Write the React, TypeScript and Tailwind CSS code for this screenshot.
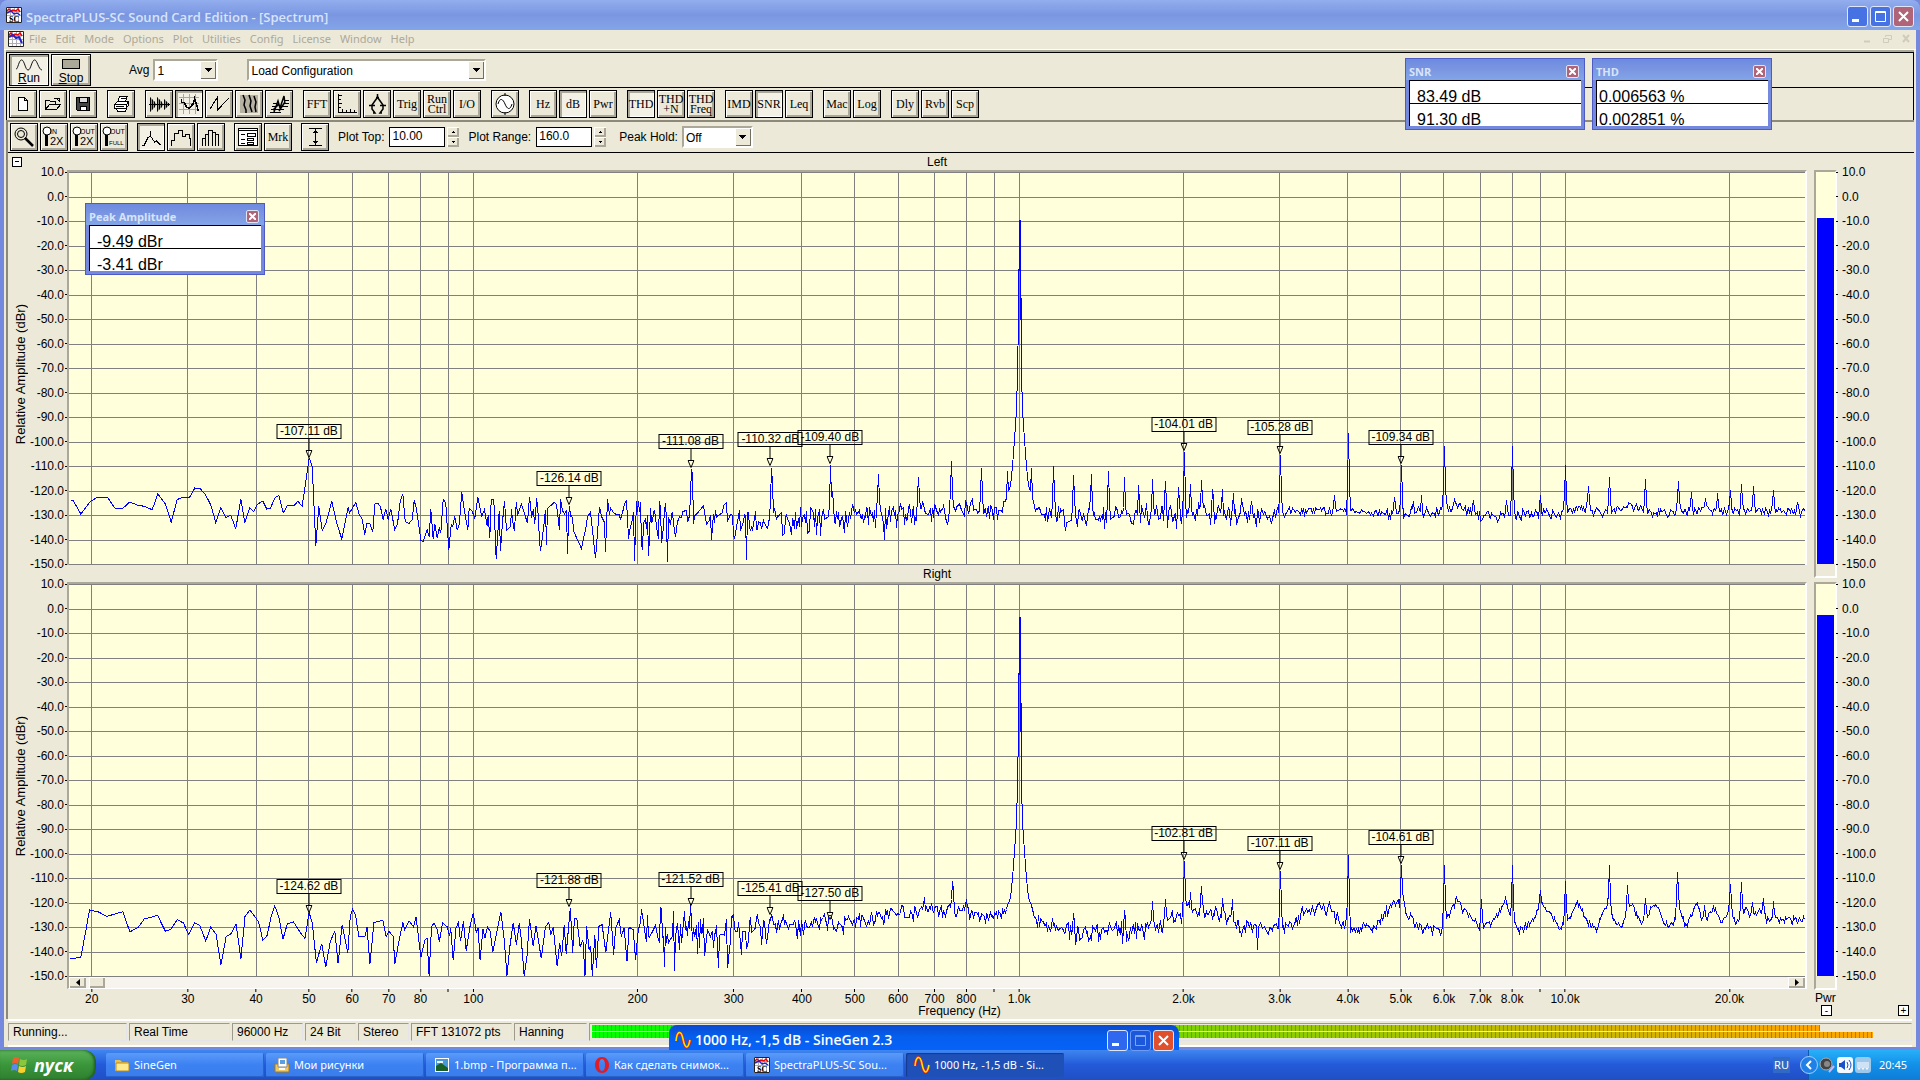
import React from "react";

type Point = [number, number];

// window x of the plot's left edge, all trace tables below use window pixels
const PLOT_X = 69;
const PLOT_W = 1736;
const PLOT_H = 393;

const DB_TICKS = [10, 0, -10, -20, -30, -40, -50, -60, -70, -80, -90, -100, -110, -120, -130, -140, -150];

const FREQS = [
  20, 30, 40, 50, 60, 70, 80, 90, 100, 200, 300, 400, 500, 600, 700, 800, 900, 1000, 2000, 3000, 4000, 5000, 6000,
  7000, 8000, 9000, 10000, 20000,
];

const freqX = (f: number) => 473.3 + 545.9 * Math.log10(f / 100) - PLOT_X;
const dbY = (db: number) => 0.5 + (10 - db) * 2.45;

// low band of both channels
const leftLow = scale(
  [
    [210, 1052], [218, 1052], [241, 1093], [270, 1055], [292, 1042], [320, 1042], [343, 1075], [368, 1075],
    [388, 1057], [410, 1066], [432, 1070], [455, 1080], [472, 1033], [494, 1062], [512, 1117], [530, 1050],
    [547, 1042], [566, 1045], [583, 1015], [600, 1018], [615, 1035], [631, 1066], [646, 1119], [661, 1074],
    [676, 1103], [691, 1097], [706, 1137], [721, 1048], [733, 1119], [748, 1075], [760, 1086], [770, 1064],
    [787, 1054], [799, 1078], [810, 1075], [823, 1045], [835, 1037], [848, 1090], [860, 1068], [880, 1068],
    [892, 1055], [905, 1069], [926, 925], [935, 950], [946, 1188], [955, 1070], [965, 1142], [977, 1118],
    [994, 1055], [1010, 1125], [1024, 1168], [1043, 1073], [1047, 1090], [1066, 1058], [1076, 1095], [1085, 1108],
    [1093, 1155], [1099, 1120], [1108, 1120], [1117, 1147], [1123, 1063], [1132, 1060], [1140, 1072], [1148, 1110],
    [1156, 1078], [1163, 1110], [1171, 1078], [1183, 1140], [1191, 1122], [1199, 1055], [1207, 1033], [1214, 1115],
    [1225, 1122], [1235, 1110], [1241, 1052], [1248, 1078], [1256, 1135], [1261, 1172], [1268, 1176], [1280, 1140],
    [1286, 1162], [1291, 1078], [1298, 1168], [1303, 1122], [1310, 1165], [1316, 1135], [1321, 1150], [1328, 1048],
    [1336, 1062], [1345, 1202], [1352, 1125], [1357, 1130], [1363, 1100], [1370, 1140], [1376, 1125], [1384, 1028],
    [1392, 1085], [1402, 1140], [1406, 1075], [1415, 1085], [1423, 1105], [1432, 1043], [1444, 1100], [1452, 1080],
    [1460, 1130], [1463, 1095], [1468, 1165], [1472, 1050], [1480, 1050], [1487, 1228], [1496, 1085],
  ],
  3,
  -22.3,
);

const rightLow = scale(
  [
    [170, 355], [185, 355], [197, 352], [208, 280], [218, 211], [240, 217], [261, 230], [280, 223], [300, 216],
    [317, 277], [338, 262], [352, 238], [385, 227], [404, 275], [418, 268], [433, 240], [448, 250], [461, 284],
    [476, 249], [488, 257], [503, 304], [515, 262], [528, 283], [540, 376], [553, 290], [565, 282], [577, 252],
    [589, 358], [599, 230], [611, 211], [632, 246], [643, 302], [653, 288], [663, 232], [672, 199], [682, 232],
    [692, 299], [703, 252], [718, 247], [735, 280], [746, 296], [756, 218], [764, 250], [774, 370], [787, 312],
    [797, 382], [808, 305], [819, 275], [827, 371], [837, 255], [851, 340], [857, 228], [863, 208], [870, 228],
    [878, 290], [893, 290], [898, 262], [905, 374], [915, 248], [937, 242], [945, 290], [952, 275], [962, 290],
    [966, 374], [975, 310], [986, 248], [990, 270], [1001, 244], [1012, 262], [1018, 232], [1030, 352], [1040, 300],
    [1045, 295], [1050, 408], [1056, 262], [1062, 250], [1070, 268], [1075, 306], [1083, 250], [1095, 262],
    [1100, 290], [1103, 265], [1109, 362], [1116, 265], [1122, 248], [1127, 305], [1134, 245], [1141, 333],
    [1150, 262], [1158, 220], [1166, 280], [1170, 265], [1175, 362], [1182, 268], [1187, 295], [1193, 262],
    [1200, 275], [1206, 338], [1212, 300], [1226, 217], [1234, 300], [1241, 408], [1248, 320], [1256, 250],
    [1264, 315], [1271, 250], [1276, 300], [1283, 408], [1290, 350], [1296, 238], [1305, 320], [1312, 258],
    [1325, 356], [1335, 262], [1343, 248], [1348, 285], [1354, 262], [1364, 380], [1370, 310], [1375, 350],
    [1381, 255], [1386, 342], [1396, 205], [1402, 340], [1406, 235], [1412, 235], [1420, 322], [1427, 300],
    [1432, 408], [1436, 258], [1442, 330], [1446, 318], [1450, 408], [1456, 285], [1460, 385], [1466, 260],
    [1474, 255], [1483, 338], [1495, 217], [1502, 345], [1507, 265], [1516, 240], [1521, 290], [1528, 265],
    [1535, 365], [1540, 262], [1550, 270], [1556, 360], [1561, 290],
  ],
  2.45,
  255.7,
);

// noise floor: x, mean dB, spread
const leftFloor = [
  [500, -131, 12], [650, -132, 12], [670, -131, 8], [800, -131, 7], [900, -129, 6], [960, -127, 5], [1000, -127, 4],
  [1040, -127, 4], [1060, -130, 5], [1200, -129, 6], [1260, -130, 5], [1310, -127.5, 2], [1380, -129, 2.5],
  [1430, -129, 3], [1460, -125, 2.5], [1475, -130, 3], [1540, -129, 3], [1560, -129, 2.5], [1580, -126, 2],
  [1600, -129, 2.5], [1630, -126, 2], [1650, -129, 2.5], [1680, -128, 2.5], [1740, -128, 2], [1806, -128, 2],
];

const leftPeaks: Point[] = [
  [536, -123], [569, -126], [595, -147.5], [634, -148.5], [638, -124], [648, -146.5], [665, -125], [667, -149],
  [691, -111], [692, -113], [746, -148], [771, -110.5], [772, -117], [816, -138], [830, -109.5], [832, -120],
  [878, -113], [884, -140], [918, -114.5], [951, -107.7], [981, -110.5], [1007, -112], [1031, -110.5],
  [1053, -109.8], [1073, -113.5], [1091, -113], [1108, -112], [1124, -114.5], [1138, -117.6], [1152, -115],
  [1165, -116], [1178, -118.5], [1184, -104], [1190, -117], [1201, -115.5], [1212, -119], [1222, -119],
  [1233, -121], [1241, -123], [1251, -124], [1280, -105.3], [1334, -121.7], [1348, -96.2], [1394, -122.4],
  [1401, -109.4], [1413, -124], [1421, -121.7], [1444, -101.7], [1473, -123.7], [1506, -123.7], [1512, -101.7],
  [1540, -121.7], [1565, -109.4], [1588, -118], [1609, -114.5], [1645, -115], [1678, -116], [1691, -120.5],
  [1705, -123], [1717, -121], [1730, -119.6], [1741, -117], [1753, -118], [1773, -119.6], [1797, -124.4],
];

const rightFloor = [
  [637, -131, 12], [680, -131, 11], [740, -131, 8], [790, -129, 5], [840, -128, 5], [870, -126, 5], [900, -123.5, 4],
  [930, -122.5, 4], [960, -123, 4], [980, -125, 3], [1000, -125, 4], [1038, -127, 4], [1060, -131, 4],
  [1130, -131, 5], [1155, -130, 4], [1175, -125, 4], [1190, -122.5, 4], [1215, -124, 4], [1241, -129.5, 4],
  [1270, -130.5, 3], [1290, -129, 4], [1302, -123.6, 4], [1317, -121, 3], [1329, -122.5, 4], [1341, -127, 4],
  [1353, -130.4, 3], [1374, -130, 3], [1384, -124, 4], [1394, -119.5, 3], [1404, -121, 3], [1413, -127, 3],
  [1421, -130.4, 3], [1441, -130, 3], [1447, -125.7, 2], [1456, -119, 2], [1466, -124, 2], [1482, -130.5, 2],
  [1494, -126, 2], [1505, -119.5, 2], [1511, -127, 2], [1519, -130, 3], [1531, -128, 2], [1539, -121, 2],
  [1547, -122, 2], [1560, -130, 2], [1568, -127, 2], [1577, -119.5, 2], [1588, -128, 2], [1596, -130.4, 2],
  [1606, -121, 2], [1613, -127, 2], [1621, -130, 2], [1631, -119.5, 2], [1641, -128.4, 2],
  [1655, -120, 2], [1664, -128.4, 2], [1672, -129, 2], [1678, -121, 2], [1686, -130, 2],
  [1696, -120, 2], [1704, -128, 2], [1713, -121, 2], [1721, -128, 2], [1730, -122, 2], [1735, -128, 2],
  [1746, -122, 2], [1752, -127, 2], [1757, -123, 2], [1766, -126, 3], [1775, -127, 2], [1806, -126.5, 2],
];

const rightPeaks: Point[] = [
  [664, -146], [674, -147.7], [690, -120.6], [704, -141.7], [718, -146.5], [727, -146.7], [733, -124.5],
  [741, -141], [757, -125], [771, -125], [783, -124.7], [829, -125], [924, -117.5], [952, -111], [953, -115],
  [966, -118.5], [1073, -124], [1075, -137], [1124, -123], [1152, -119], [1165, -118.4], [1184, -102.8],
  [1190, -115.7], [1201, -113], [1222, -118], [1232, -118.4], [1257, -139], [1280, -107], [1348, -100.5],
  [1401, -104.6], [1444, -104.6], [1456, -117], [1481, -118.4], [1505, -118], [1512, -104.6], [1540, -114.8],
  [1565, -111], [1609, -104.6], [1627, -112.7], [1645, -117.8], [1677, -107.3], [1704, -121], [1730, -112.3],
  [1741, -111.4], [1752, -119.5], [1763, -118], [1773, -119.3],
];

// skirt of the 1 kHz carrier: distance, dB
const skirt: Point[] = [
  [0, 0], [1, -50], [2, -72], [3, -87], [5, -99], [7, -110], [9, -118], [12, -121], [15, -126], [18, -140],
];

function scale(pts: Point[], sx: number, oy: number): Point[] {
  return pts.map(([x, y]) => [x / sx - PLOT_X, y / 3 + oy]);
}

function lerp(table: number[][], x: number, col: number) {
  let i = 1;
  while (i < table.length - 1 && table[i][0] < x) i++;
  const a = table[i - 1];
  const b = table[i];
  const t = Math.min(1, Math.max(0, (x - a[0]) / (b[0] - a[0])));
  return a[col] + (b[col] - a[col]) * t;
}

function buildTrace(low: Point[], start: number, floor: number[][], peaks: Point[], carrier: number, seed: number) {
  const pts = [...low];
  let s = seed;
  const rnd = () => {
    s = (s * 16807) % 2147483647;
    return s / 2147483647;
  };
  for (let x = start; x <= 1805; x++) {
    const peak = peaks.find((p) => p[0] === x);
    const r = rnd() + rnd() - 1;
    const mean = lerp(floor, x, 1);
    const amp = lerp(floor, x, 2);
    const draw = rnd();
    const d = Math.abs(x - 1019);
    if (peak) {
      pts.push([x - PLOT_X, dbY(peak[1])]);
      continue;
    }
    const near = peaks.find((p) => Math.abs(p[0] - x) < 3 && p[1] > mean);
    // bins are further apart at the low end of the log axis
    const keep = x < 620 ? 0.45 : x < 760 ? 0.6 : 0.8;
    if (draw > keep && d > 18 && !near) continue;
    let db = mean + r * amp * (r < 0 ? 1.3 : 0.9);
    if (near && Math.abs(near[0] - x) === 1) db = db * 0.65 + near[1] * 0.35;
    if (d < 18) db = Math.max(db, d === 0 ? carrier : lerp(skirt, d, 1));
    pts.push([x - PLOT_X, dbY(Math.max(-150, db))]);
  }
  pts.push([1020 - PLOT_X, dbY(carrier)]);
  pts.sort((a, b) => a[0] - b[0]);
  return pts.map(([x, y]) => (x + 0.5).toFixed(1) + "," + y.toFixed(1)).join(" ");
}

const leftTrace = buildTrace(leftLow, 500, leftFloor, leftPeaks, -9.49, 77);
const rightTrace = buildTrace(rightLow, 638, rightFloor, rightPeaks, -3.41, 4242);

const leftMarkers: Point[] = [
  [50, -107.11], [150, -126.14], [250, -111.08], [350, -110.32], [450, -109.4], [2000, -104.01], [3000, -105.28],
  [5000, -109.34],
];
const rightMarkers: Point[] = [
  [50, -124.62], [150, -121.88], [250, -121.52], [350, -125.41], [450, -127.5], [2000, -102.81], [3000, -107.11],
  [5000, -104.61],
];

const UP = "shadow-[inset_1px_1px_0_#fff,inset_-2px_-2px_0_#aca899]";
const DOWN = "shadow-[inset_2px_2px_0_#aca899,inset_-1px_-1px_0_#fff]";

function ToolButton({ label, active, children }: { label: string; active?: boolean; children: React.ReactNode }) {
  return (
    <button
      aria-label={label}
      className={
        "flex h-7 w-7 items-center justify-center border border-black font-['Liberation_Serif',serif] leading-[11px] " +
        (active ? "bg-[#f3f1e6] " + DOWN : "bg-[#ece9d8] " + UP)
      }
    >
      {children}
    </button>
  );
}

function TextTool({ text, active, small }: { text: string; active?: boolean; small?: boolean }) {
  return (
    <ToolButton label={text} active={active}>
      <span className={"whitespace-pre text-center text-[12px] " + (small ? "leading-[10px]" : "leading-3")}>
        {text}
      </span>
    </ToolButton>
  );
}

function Icon({ children }: { children: React.ReactNode }) {
  return (
    <svg width="24" height="24" viewBox="0 0 24 24" fill="none" stroke="#000" shapeRendering="crispEdges">
      {children}
    </svg>
  );
}

function Lens({ top, bottom }: { top: string; bottom: string }) {
  return (
    <svg width="24" height="24" viewBox="0 0 24 24" fill="none" stroke="#000">
      <circle cx="5" cy="6" r="4" fill="#fff" />
      <path d="M4.500 10v11" strokeWidth="3" />
      <text x="8" y="9" fontSize="7" stroke="none" fill="#000" fontFamily="Liberation Sans">
        {top}
      </text>
      <text x={bottom === "2X" ? 8 : 7} y="20" fontSize={bottom === "2X" ? 11 : 6} stroke="none" fill="#000" fontFamily="Liberation Sans">
        {bottom}
      </text>
    </svg>
  );
}

function Combo({ label, options, className }: { label: string; options: string[]; className: string }) {
  return (
    <div className={"flex h-[22px] border-2 border-[#aca899] border-b-white border-r-white bg-white " + className}>
      <select aria-label={label} className="min-w-0 flex-1 appearance-none bg-white pl-[2px] pt-px text-[12px] leading-4 outline-none">
        {options.map((o) => (
          <option key={o}>{o}</option>
        ))}
      </select>
      <span className="pointer-events-none flex w-4 items-center justify-center bg-[#ece9d8] shadow-[inset_1px_1px_0_#fff,inset_-1px_-1px_0_#716f64]">
        <svg width="7" height="4" viewBox="0 0 7 4" shapeRendering="crispEdges">
          <path d="M0 0h7L3.500 4z" />
        </svg>
      </span>
    </div>
  );
}

function Spin({ id, label, value }: { id: string; label: string; value: string }) {
  return (
    <div className="flex items-center">
      <label htmlFor={id} className="pr-[5px]">
        {label}
      </label>
      <input id={id} defaultValue={value} className="h-5 w-14 border border-black bg-white pb-[2px] pl-[2px] outline-none" />
      <div className="ml-[2px] flex w-3 flex-col">
        <button aria-label={label + " up"} className={"flex h-[10px] items-center justify-center " + UP}>
          <svg width="3" height="2" viewBox="0 0 3 2" shapeRendering="crispEdges">
            <path d="M0 2h3L1.500 0z" />
          </svg>
        </button>
        <button aria-label={label + " down"} className={"flex h-[10px] items-center justify-center " + UP}>
          <svg width="3" height="2" viewBox="0 0 3 2" shapeRendering="crispEdges">
            <path d="M0 0h3L1.500 2z" />
          </svg>
        </button>
      </div>
    </div>
  );
}

function AppIcon() {
  return (
    <svg width="16" height="16" viewBox="0 0 16 16">
      <path d="M0 0h16v16H0z" fill="#fff" />
      <path d="M0 4.500h16M0 8.500h16M0 12.500h16M4.500 0v16M8.500 0v16M12.500 0v16" stroke="#b0b0b0" fill="none" />
      <path d="M1 4l2-2 2 3 2-2 3 1 2-2 2 3" stroke="#e00" strokeWidth="1.500" fill="none" />
      <path d="M1 6l4-2 3 3 3-1 3 6" stroke="#22c" strokeWidth="2" fill="none" />
      <path d="M.5.5h15v15H.5z" fill="none" stroke="#222" />
    </svg>
  );
}

// same sheet icon with the SC badge
function AppIconSC() {
  return (
    <svg width="16" height="16" viewBox="0 0 16 16">
      <path d="M0 0h16v16H0z" fill="#fff" />
      <path d="M0 4.500h16M0 8.500h16M4.500 0v16M8.500 0v16M12.500 0v16" stroke="#b0b0b0" fill="none" />
      <path d="M1 4l2-2 2 2 2-1 3 1 2-2 2 3" stroke="#e00" strokeWidth="1.500" fill="none" />
      <path d="M1 6l4-2 3 3 3-1 3 2" stroke="#22c" strokeWidth="1.500" fill="none" />
      <path d="M.5.5h15v15H.5z" fill="none" stroke="#222" />
      <text x="3" y="15" fontSize="8" fontWeight="bold" fontFamily="Liberation Serif">
        SC
      </text>
    </svg>
  );
}

function SineIcon() {
  return (
    <svg width="16" height="20" viewBox="0 0 16 20" fill="none">
      <path d="M1 11C2 1 6-1 8 9s5 11 7 1" stroke="#e02020" strokeWidth="3" />
      <path d="M1 11C2 1 6-1 8 9s5 11 7 1" stroke="#ffe600" strokeWidth="1.500" />
    </svg>
  );
}

function Readout({ title, rows, pad }: { title: string; rows: string[]; pad: string }) {
  return (
    <section className="flex h-[72px] w-[180px] flex-col border border-[#4f5bc4] bg-[#7488dd] px-[3px] pb-[3px] font-['Liberation_Sans',sans-serif]">
      <div className="-mx-[3px] flex h-[21px] items-center justify-between bg-linear-to-b from-[#6d8ae0] via-[#7b96e1] to-[#82a5e8] pl-[3px] pr-[5px] pt-1">
        <h2 className="font-['Open_Sans',sans-serif] text-[11px] font-bold leading-4 text-[#d8e4f8]">{title}</h2>
        <button aria-label={"Close " + title} className="flex h-[13px] w-[13px] items-center justify-center rounded-xs border border-[#dfe3f5] bg-[#b06478]">
          <svg width="7" height="7" viewBox="0 0 7 7" stroke="#fff" strokeWidth="2">
            <path d="M0 0l7 7M7 0L0 7" />
          </svg>
        </button>
      </div>
      <div className="flex flex-1 flex-col border-l border-t border-black bg-white">
        <p className={"border-b border-black pt-[10px] text-[16px] leading-3 " + pad}>{rows[0]}</p>
        <p className={"pt-[10px] text-[16px] leading-3 " + pad}>{rows[1]}</p>
      </div>
    </section>
  );
}

function DbScale({ side }: { side: "left" | "right" }) {
  return (
    <ol
      className={
        "-my-[6px] flex h-[404px] flex-col justify-between text-[12px] leading-3 " +
        (side === "left" ? "items-end" : "items-start")
      }
    >
      {DB_TICKS.map((db) => (
        <li key={db} className={"flex items-center " + (side === "left" ? "gap-px" : "flex-row-reverse gap-1")}>
          <span>{db.toFixed(1)}</span>
          <i className="h-px w-[2px] bg-black" />
        </li>
      ))}
    </ol>
  );
}

function Channel({ name, trace, markers }: { name: string; trace: string; markers: Point[] }) {
  return (
    <section>
      <div className="flex h-[17px] items-center">
        <div className="flex w-[59px] pl-1">
          {name === "Left" && (
            <button aria-label="Collapse" className="flex h-[10px] w-[10px] items-center justify-center border border-black bg-white">
              <i className="h-px w-1 bg-black" />
            </button>
          )}
        </div>
        <h3 className="flex-1 text-center text-[12px] leading-4">{name}</h3>
      </div>
      <div className="flex">
        <div className="flex w-[59px] justify-between pt-[2px]">
          <div className="flex w-6 items-center justify-center pl-1 pt-3">
            <span className="rotate-180 whitespace-nowrap text-[13px] leading-4 [writing-mode:vertical-rl]">
              Relative Amplitude (dBr)
            </span>
          </div>
          <DbScale side="left" />
        </div>
        <div className="relative min-w-0 flex-1 border-2 border-b-0 border-[#aca899] border-r-white bg-[#ffffdc]">
          <svg
            className="block h-[393px] w-full"
            viewBox={"0 0 " + PLOT_W + " " + PLOT_H}
            preserveAspectRatio="none"
            fill="none"
            shapeRendering="crispEdges"
          >
            {DB_TICKS.map((db) => (
              <line key={db} x1="0" x2={PLOT_W} y1={dbY(db)} y2={dbY(db)} stroke="#808080" />
            ))}
            {FREQS.map((f) => (
              <line key={f} x1={freqX(f)} x2={freqX(f)} y1="0" y2={PLOT_H} stroke="#808080" />
            ))}
            <polyline points={trace} stroke="#0000ff" vectorEffect="non-scaling-stroke" />
          </svg>
          {markers.map(([f, db]) => (
            <div
              key={f}
              className="absolute flex -translate-x-1/2 flex-col items-center"
              style={{ left: (freqX(f) / PLOT_W) * 100 + "%", top: Math.round(dbY(db) - 35) }}
            >
              <span className="w-[65px] whitespace-nowrap border border-black text-center text-[12px] leading-[13px]">
                {db.toFixed(2)} dB
              </span>
              <svg width="7" height="19" viewBox="0 0 7 19" fill="none" stroke="#000">
                <path d="M3.500 0v11M.5 11.500h6L3.500 18.500z" />
              </svg>
            </div>
          ))}
        </div>
      </div>
    </section>
  );
}

function PowerMeter({ level, last }: { level: string; last?: boolean }) {
  return (
    <div className={"flex " + (last ? "" : "mb-1")}>
      <div className="h-[408px] w-[23px] border-2 border-[#aca899] border-b-white border-r-white">
        <div className="flex h-[392px] flex-col justify-end bg-[#ffffdc] px-px">
          <div className={"w-full bg-[#0000ff] " + level} />
        </div>
      </div>
      <div className="-ml-px pt-[2px]">
        <DbScale side="right" />
      </div>
    </div>
  );
}

function freqLabel(f: number) {
  if (f === 90 || f === 900 || f === 9000) return "";
  return f >= 1000 ? (f / 1000).toFixed(1) + "k" : String(f);
}

function StatusCell({ text, className }: { text: string; className: string }) {
  return (
    <span className={"h-[18px] border border-[#9d9a8c] border-b-[#e4e4ea] border-r-[#e4e4ea] pl-1 leading-4 " + className}>
      {text}
    </span>
  );
}

function Task({ text, active, icon }: { text: string; active?: boolean; icon: React.ReactNode }) {
  return (
    <button
      className={
        "flex h-6 w-[158px] items-center gap-1 rounded-xs pl-2 text-[11px] leading-4 text-white " +
        (active
          ? "bg-[#1e50b8] shadow-[inset_1px_1px_1px_#153a8c]"
          : "bg-linear-to-b from-[#5a9af8] via-[#3c81f3] to-[#3a7cea] shadow-[inset_-1px_-1px_0_#2a62cc]")
      }
    >
      {icon}
      <span className="truncate">{text}</span>
    </button>
  );
}

function TitleButton({ kind, tone }: { kind: "min" | "max" | "close"; tone: string }) {
  return (
    <button aria-label={kind} className={"flex h-[21px] w-[21px] items-center justify-center rounded-[3px] border " + tone}>
      <svg width="13" height="13" viewBox="0 0 13 13" fill="none" stroke="currentColor">
        {kind === "min" && <path d="M1 10.500h7" strokeWidth="3" />}
        {kind === "max" && <path d="M1.500 1.500h10v10h-10zM1 2.500h11" />}
        {kind === "close" && <path d="M2 2l9 9M11 2l-9 9" strokeWidth="2" />}
      </svg>
    </button>
  );
}

function App() {
  return (
    <div className="relative flex min-h-screen flex-col bg-[#7488dd] font-['Liberation_Sans',sans-serif] text-[12px] text-black">
      <header className="flex h-[30px] items-center rounded-t-lg bg-linear-to-b from-[#92aeee] via-[#7b96e1] to-[#82a5e8] pl-[6px] pr-[6px]">
        <AppIconSC />
        <h1 className="flex-1 pl-1 pt-1 font-['Open_Sans',sans-serif] text-[13px] font-semibold leading-5 text-[#d8e4f8]">
          SpectraPLUS-SC Sound Card Edition - [Spectrum]
        </h1>
        <div className="flex gap-[2px] pt-[3px] text-white">
          <TitleButton kind="min" tone="border-[#dfe6fa] bg-[#4672e4]" />
          <TitleButton kind="max" tone="border-[#dfe6fa] bg-[#4672e4]" />
          <TitleButton kind="close" tone="border-[#dfe6fa] bg-[#b06478]" />
        </div>
      </header>

      <main className="mx-1 flex flex-1 flex-col bg-[#ece9d8]">
        <nav className="flex h-5 items-center border-b border-white pb-[2px] pl-1 font-['Noto_Sans',sans-serif] text-[11px] leading-4 text-[#aca899]">
          <AppIcon />
          {["File", "Edit", "Mode", "Options", "Plot", "Utilities", "Config", "License", "Window", "Help"].map((m) => (
            <button key={m} className="pl-[5px] pr-1">
              {m}
            </button>
          ))}
          <div className="ml-auto pr-[5px]">
            <svg width="48" height="9" viewBox="0 0 48 9" fill="none" stroke="#cfccbc">
              <path d="M1 7.500h6" strokeWidth="2" />
              <path d="M20.500 4.500h5v4h-5zM22.500 3V1.500h6v4H26" />
              <path d="M40 1l6 7M46 1l-6 7" strokeWidth="2" />
            </svg>
          </div>
        </nav>

        <div className="ml-[2px] mr-[2px] border-t-2 border-[#aca899]">
          <div className="border-x border-t border-black">
            <div className="flex h-[35px] items-center border-b border-black pl-[2px]">
              <button className={"flex h-8 w-10 flex-col items-center border border-black bg-[#f3f1e6] pt-1 text-[12px] leading-[14px] " + DOWN}>
                <svg width="30" height="13" viewBox="0 0 30 13" fill="none" stroke="#000">
                  <path d="M1 11C3 11 4 1 7 1s4 11 7 11 4-11 7-11 4 10 8 11" />
                </svg>
                <span>
                  <u>R</u>un
                </span>
              </button>
              <button className={"ml-[2px] flex h-8 w-10 flex-col items-center border border-black pt-1 text-[12px] leading-[14px] " + UP}>
                <span className="mb-[2px] h-[11px] w-[18px] border border-black bg-[#aca899]" />
                <span>
                  <u>S</u>top
                </span>
              </button>
              <span className="ml-[38px] mr-1">Avg</span>
              <Combo label="Avg" options={["1"]} className="w-[65px]" />
              <Combo label="Configuration" options={["Load Configuration"]} className="ml-[29px] w-[239px]" />
            </div>

            <div className="flex h-8 items-center gap-[10px] pl-[2px]">
              <div className="flex gap-[2px]">
                <ToolButton label="New">
                  <Icon><path d="M7.500 5.500h6l3 3v10h-9zM13.500 5.500v3h3" fill="#fff" /></Icon>
                </ToolButton>
                <ToolButton label="Open">
                  <Icon><path d="M4.500 17.500v-9h4l1 1h5v3M4.500 17.500l4-5h11l-4 5zM13 6.500h5v3M16 7l3 3" /></Icon>
                </ToolButton>
                <ToolButton label="Save">
                  <Icon>
                    <path d="M5.500 5.500h13v13h-12l-1-1z" fill="#444" />
                    <path d="M8 5.500h8v5H8z" fill="#ddd" />
                    <path d="M9 18v-4h6v4" fill="#fff" />
                  </Icon>
                </ToolButton>
              </div>
              <ToolButton label="Print">
                <Icon>
                  <path d="M5.500 12.500l3-3h11l-2 3zM9.500 9l1-5h8l-2 5M5.500 12.500v4h12v-4M17.500 16l2-3V9.500M7.500 16.500l1 3h8l1-3" fill="#fff" />
                  <path d="M11.500 6.500h5M7 14.500h8" />
                </Icon>
              </ToolButton>
              <div className="flex gap-[2px]">
                <ToolButton label="Time series">
                  <svg width="24" height="24" viewBox="0 0 24 24" fill="none" stroke="#000">
                    <path d="M2 12.500h21" />
                    <path d="M3.500 5.500v14M5.500 7.500v10M7.500 9.500v6M10.500 5.500v14M12.500 7.500v10M14.500 9.500v6M17.500 7.500v10M19.500 9.500v6M21.500 11v3" />
                    <path d="M3 5l7 7.500L3 20zM10 5l7 7.500-7 7.500zM17 7l6 5.500-6 5.500z" fill="#00000066" stroke="none" />
                  </svg>
                </ToolButton>
                <ToolButton label="Spectrum" active>
                  <Icon>
                    <path d="M2 5.500h20M2 11.500h20M2 17.500h20M6.500 2v20M12.500 2v20M18.500 2v20" stroke="#aca899" />
                    <path d="M4.500 7v3l3 1 2 4 3 1.500 2-3 2-2 1-5 2 6 2 7" strokeWidth="1.500" />
                  </Icon>
                </ToolButton>
                <ToolButton label="Phase">
                  <Icon><path d="M3 17L10.500 5v13L22 6" /></Icon>
                </ToolButton>
                <ToolButton label="Spectrogram">
                  <svg width="24" height="24" viewBox="0 0 24 24" fill="none" stroke="#000">
                    <path d="M3 3h18v18H3z" fill="#b5b2a4" stroke="none" />
                    <path d="M6 3l2 5-1 5 2 5v3M12 3l2 6-1 5 2 6M17 4l2 6-1 5 1 5" strokeWidth="1.500" />
                  </svg>
                </ToolButton>
                <ToolButton label="Surface">
                  <svg width="24" height="24" viewBox="0 0 24 24" fill="none" stroke="#000">
                    <path d="M3 20.500h11M4 17.500h13M5 14.500h4M15 14.500h6M6 11.500h4M17 11.500h5M17 8.500h5" />
                    <path d="M7 20l4-11 2 7 4-12 1 8M6 18l6-6M12 19l6-9" strokeWidth="1.500" />
                  </svg>
                </ToolButton>
              </div>
              <div className="flex gap-[2px]">
                <TextTool text="FFT" />
                <ToolButton label="Scaling">
                  <Icon><path d="M3.500 2v18.500H22M3 3.500h4M3 7.500h3M3 11.500h4M3 15.500h3M7.500 20v-3M11.500 20v-2M15.500 20v-3M19.500 20v-2" /></Icon>
                </ToolButton>
                <ToolButton label="Calibration">
                  <svg width="24" height="24" viewBox="0 0 24 24" fill="none" stroke="#000">
                    <path d="M12.500 2v4M11 5.500h3M12 6L7 13v4l3 4H8M13 6l5 7v4l-3 4h2M4 13.500h6M15 13.500h6" strokeWidth="1.500" />
                  </svg>
                </ToolButton>
                <TextTool text="Trig" />
                <TextTool text={"Run\nCtrl"} small />
                <TextTool text="I/O" />
              </div>
              <ToolButton label="Generator">
                <svg width="24" height="24" viewBox="0 0 24 24" fill="none" stroke="#000">
                  <circle cx="12" cy="12" r="9" fill="#fff" />
                  <path d="M12 1v3M12 20v3M5 12c2-7 5-5 7 0s5 7 7 0" />
                </svg>
              </ToolButton>
              <div className="flex gap-[2px]">
                <TextTool text="Hz" />
                <TextTool text="dB" active />
                <TextTool text="Pwr" />
              </div>
              <div className="flex gap-[2px]">
                <TextTool text="THD" active />
                <TextTool text={"THD\n+N"} small />
                <TextTool text={"THD\nFreq"} small />
              </div>
              <div className="flex gap-[2px]">
                <TextTool text="IMD" />
                <TextTool text="SNR" active />
                <TextTool text="Leq" />
              </div>
              <div className="flex gap-[2px]">
                <TextTool text="Mac" />
                <TextTool text="Log" />
              </div>
              <div className="flex gap-[2px]">
                <TextTool text="Dly" />
                <TextTool text="Rvb" />
                <TextTool text="Scp" />
              </div>
            </div>
          </div>
        </div>

        <div className="ml-[2px] mr-[2px] flex flex-1 flex-col border-l-2 border-[#8d8a7c]">
          <div className="flex h-[33px] items-center gap-[9px] border-b border-t-2 border-b-black border-t-[#8d8a7c] pl-[2px]">
            <div className="flex gap-[2px]">
              <ToolButton label="Zoom">
                <svg width="24" height="24" viewBox="0 0 24 24" fill="none" stroke="#000">
                  <circle cx="9" cy="9" r="6" />
                  <circle cx="9" cy="9" r="3.500" />
                  <path d="M13 13l8 8" strokeWidth="2.500" />
                </svg>
              </ToolButton>
              <ToolButton label="Zoom in"><Lens top="IN" bottom="2X" /></ToolButton>
              <ToolButton label="Zoom out"><Lens top="OUT" bottom="2X" /></ToolButton>
              <ToolButton label="Zoom out full"><Lens top="OUT" bottom="FULL" /></ToolButton>
            </div>
            <div className="flex gap-[2px]">
              <ToolButton label="Line" active>
                <Icon><path d="M3 20.500h2l4-8 2-1V6M11.500 6v5l4 6 2-1 4 4" /></Icon>
              </ToolButton>
              <ToolButton label="Bars">
                <Icon><path d="M2.500 21v-6h3V8.500h4v-3h4v6h3v-2h4V13h1v8" /></Icon>
              </ToolButton>
              <ToolButton label="Columns">
                <Icon><path d="M3.500 21v-8h3v8-12h3v12V5.500h4V21 7.500h3V21 9.500h3V21" /></Icon>
              </ToolButton>
            </div>
            <div className="flex gap-[2px]">
              <ToolButton label="Options">
                <Icon>
                  <path d="M2.500 3.500h19v17h-19z" fill="#fff" />
                  <path d="M3 5.500h18M11.500 8.500h8v3h-8zM11.500 13.500h6v2h-6zM11.500 17.500h6v2h-6zM5 9.500h4M5 14.500h4M5 18.500h4" />
                </Icon>
              </ToolButton>
              <TextTool text="Mrk" />
            </div>
            <ToolButton label="Autoscale">
              <Icon><path d="M6 3.500h13M6 20.500h13M12.500 4v16M10 7.500h5M11 6.500h3M10 16.500h5M11 17.500h3" /></Icon>
            </ToolButton>
            <Spin id="top" label="Plot Top:" value="10.00" />
            <Spin id="range" label="Plot Range:" value="160.0" />
            <div className="flex items-center gap-1 pl-1">
              <span>Peak Hold:</span>
              <Combo label="Peak Hold" options={["Off"]} className="w-[71px]" />
            </div>
          </div>

          <div className="flex flex-1">
            <div className="flex min-w-0 flex-1 flex-col">
              <Channel name="Left" trace={leftTrace} markers={leftMarkers} />
              <Channel name="Right" trace={rightTrace} markers={rightMarkers} />
              <div className="ml-[59px] flex h-3 border-b border-l-2 border-r-2 border-[#aca899] border-b-white border-r-white bg-[#f6f4ec]">
                <button aria-label="Scroll left" className={"flex w-[17px] items-center justify-center bg-[#ece9d8] " + UP}>
                  <svg width="4" height="7" viewBox="0 0 4 7"><path d="M4 0v7L0 3.500z" /></svg>
                </button>
                <span className={"ml-[3px] w-4 bg-[#ece9d8] " + UP} />
                <button aria-label="Scroll right" className={"ml-auto flex w-[17px] items-center justify-center bg-[#ece9d8] " + UP}>
                  <svg width="4" height="7" viewBox="0 0 4 7"><path d="M0 0v7l4-3.500z" /></svg>
                </button>
              </div>
              <div className="relative ml-[61px] mr-[2px] h-4">
                {FREQS.map((f) => (
                  <span
                    key={f}
                    className="absolute top-0 flex -translate-x-1/2 flex-col items-center gap-px leading-3"
                    style={{ left: (freqX(f) / PLOT_W) * 100 + "%" }}
                  >
                    <i className="h-[3px] w-px bg-black" />
                    {freqLabel(f)}
                  </span>
                ))}
              </div>
              <p className="ml-[104px] text-center leading-3">Frequency (Hz)</p>
            </div>

            <div className="ml-[7px] w-[100px] pt-[17px]">
              <PowerMeter level="h-[346px]" />
              <PowerMeter level="h-[361px]" last />
              <p className="pl-px pt-[2px] leading-3">Pwr</p>
              <div className="flex justify-between pl-[7px] pr-[5px] pt-px">
                <button aria-label="Narrower" className="h-[11px] w-[11px] border border-black bg-white text-[10px] leading-[8px]">-</button>
                <button aria-label="Wider" className="h-[11px] w-[11px] border border-black bg-white text-[10px] leading-[8px]">+</button>
              </div>
            </div>
          </div>
        </div>

        <footer className="mx-1 flex h-7 items-start gap-[2px] border-b-2 border-t-2 border-white pt-[2px] leading-4">
          <StatusCell text="Running..." className="w-[119px]" />
          <StatusCell text="Real Time" className="w-[101px]" />
          <StatusCell text="96000 Hz" className="w-[71px]" />
          <StatusCell text="24 Bit" className="w-[51px]" />
          <StatusCell text="Stereo" className="w-[51px]" />
          <StatusCell text="FFT 131072 pts" className="w-[101px]" />
          <StatusCell text="Hanning" className="w-[73px]" />
          <div className="flex h-[18px] flex-1 flex-col gap-px border border-[#9d9a8c] border-b-[#e4e4ea] border-r-[#e4e4ea] pl-[2px] pr-[38px] pt-px">
            {["mr-[53px]", ""].map((m) => (
              <div key={m} className={"h-[6px] overflow-hidden " + m}>
                <div className="h-full bg-[repeating-linear-gradient(90deg,transparent_0_3px,#808080_3px_4px),linear-gradient(90deg,#00ff00,#7ad400_46%,#ffa500)]" />
              </div>
            ))}
          </div>
        </footer>
      </main>

      <div className="h-[3px]" />

      <div className="relative flex h-[30px] items-center bg-linear-to-b from-[#3f86f0] via-[#2459d8] to-[#1f4fc4] font-['Noto_Sans',sans-serif]">
        <section className="absolute bottom-full left-[669px] flex h-[25px] w-[510px] items-center rounded-t-lg bg-linear-to-b from-[#0a4ad0] via-[#0560f0] to-[#0662f8] pl-[6px] pr-[5px] pt-[5px]">
          <SineIcon />
          <h2 className="flex-1 pl-1 font-['Open_Sans',sans-serif] text-[14px] font-semibold leading-5 text-white">
            1000 Hz, -1,5 dB - SineGen 2.3
          </h2>
          <div className="flex gap-[2px]">
            <TitleButton kind="min" tone="border-[#dfe6fa] bg-[#2f68ee] text-white" />
            <TitleButton kind="max" tone="border-[#6f9bf6] bg-[#1c58dc] text-[#7fa6f5]" />
            <TitleButton kind="close" tone="border-[#dfe6fa] bg-[#e0502c] text-white" />
          </div>
        </section>

        <button className="flex h-full w-[96px] items-center gap-1 rounded-r-xl bg-linear-to-b from-[#5bb35b] via-[#3a963a] to-[#2f7f2f] pl-[10px] shadow-[inset_-2px_0_3px_#1d5a1d]">
          <svg width="20" height="20" viewBox="0 0 20 20">
            <path d="M3 3q3-2 6 0L8 9Q5 7 2 9z" fill="#f0602c" />
            <path d="M10 4q4 2 7 0l-1 6q-4 2-7 0z" fill="#8cc63c" />
            <path d="M2 10q3-2 6 0l-1 6q-3-2-6 0z" fill="#5a8cf0" />
            <path d="M9 11q4 2 7 0l-1 6q-4 2-7 0z" fill="#fcd02c" />
          </svg>
          <span className="font-['Open_Sans',sans-serif] text-[18px] font-bold italic leading-6 text-white">пуск</span>
        </button>

        <div className="ml-[10px] flex gap-[2px]">
          <Task
            text="SineGen"
            icon={
              <svg width="16" height="16" viewBox="0 0 16 16">
                <path d="M1 3h5l2 2h6v9H1z" fill="#e8c050" />
                <path d="M2 6h13v8H2z" fill="#fdea90" stroke="#b98a20" />
              </svg>
            }
          />
          <Task
            text="Мои рисунки"
            icon={
              <svg width="16" height="16" viewBox="0 0 16 16">
                <path d="M1 7h14v8H1z" fill="#f0c860" stroke="#a87818" />
                <path d="M4 1h9v9H4z" fill="#fff" stroke="#888" />
                <path d="M6 3h5v4H6z" fill="#58a0e0" />
                <path d="M5 12h6" stroke="#fff" strokeWidth="2" />
              </svg>
            }
          />
          <Task
            text="1.bmp - Программа п..."
            icon={
              <svg width="16" height="16" viewBox="0 0 16 16">
                <path d="M1 1h14v14H1z" fill="#fff" />
                <path d="M2 2h12v12H2z" fill="#4898d8" />
                <path d="M2 9l5-3 7 5v3H2z" fill="#186028" />
                <path d="M3 4h6v2H3z" fill="#e8f4ff" />
              </svg>
            }
          />
          <Task
            text="Как сделать снимок..."
            icon={
              <svg width="16" height="16" viewBox="0 0 16 16">
                <path
                  d="M8 0c4 0 7 3.500 7 8s-3 8-7 8-7-3.500-7-8 3-8 7-8zm0 2C6 2 5 5 5 8s1 6 3 6 3-3 3-6-1-6-3-6z"
                  fill="#e01c24"
                  fillRule="evenodd"
                />
              </svg>
            }
          />
          <Task text="SpectraPLUS-SC Sou..." icon={<AppIconSC />} />
          <Task text="1000 Hz, -1,5 dB - Si..." active icon={<SineIcon />} />
        </div>

        <span className="ml-auto mr-[18px] bg-[#316ac5] px-px text-[11px] leading-4 text-white">RU</span>
        <div className="relative flex h-full w-[112px] items-center gap-[2px] border-l border-[#0c5bb0] bg-linear-to-b from-[#28b0f8] via-[#1290e8] to-[#0f7cd8] pl-[10px] text-white">
          <button aria-label="Show hidden icons" className="absolute -left-[9px] flex h-[18px] w-[18px] items-center justify-center rounded-full border border-[#a0d0ff] bg-[#2080e8]">
            <svg width="8" height="10" viewBox="0 0 8 10" fill="none" stroke="#fff" strokeWidth="2"><path d="M6 1L2 5l4 4" /></svg>
          </button>
          <svg width="16" height="16" viewBox="0 0 16 16">
            <circle cx="7" cy="7" r="6" fill="#444" stroke="#aaa" />
            <circle cx="8" cy="7" r="3" fill="#888" />
            <path d="M10 15l5-6" stroke="#c8b8f0" strokeWidth="2" />
          </svg>
          <svg width="16" height="16" viewBox="0 0 16 16">
            <rect width="16" height="16" rx="3" fill="#f4f8ff" />
            <path d="M2 6h2l4-3v10l-4-3H2z" fill="#1a50c8" />
            <path d="M10 5q2 3 0 6M12 3q4 5 0 10" stroke="#1a50c8" fill="none" />
          </svg>
          <svg width="16" height="16" viewBox="0 0 16 16">
            <rect width="16" height="16" rx="3" fill="#9cc8ec" />
            <path d="M3 5v6q1 3 2 0V5M7 5v6q1 3 2 0V5M11 5v6q1 3 2 0V5" stroke="#fff" fill="none" />
          </svg>
          <time className="pl-[6px] text-[11px] leading-4">20:45</time>
        </div>
      </div>

      <div className="absolute right-[148px] top-[58px] flex gap-[7px]">
        <Readout title="SNR" rows={["83.49 dB", "91.30 dB"]} pad="pl-[7px]" />
        <Readout title="THD" rows={["0.006563 %", "0.002851 %"]} pad="pl-[2px]" />
      </div>
      <div className="absolute left-[85px] top-[203px]">
        <Readout title="Peak Amplitude" rows={["-9.49 dBr", "-3.41 dBr"]} pad="pl-[7px]" />
      </div>
    </div>
  );
}

export default App;
